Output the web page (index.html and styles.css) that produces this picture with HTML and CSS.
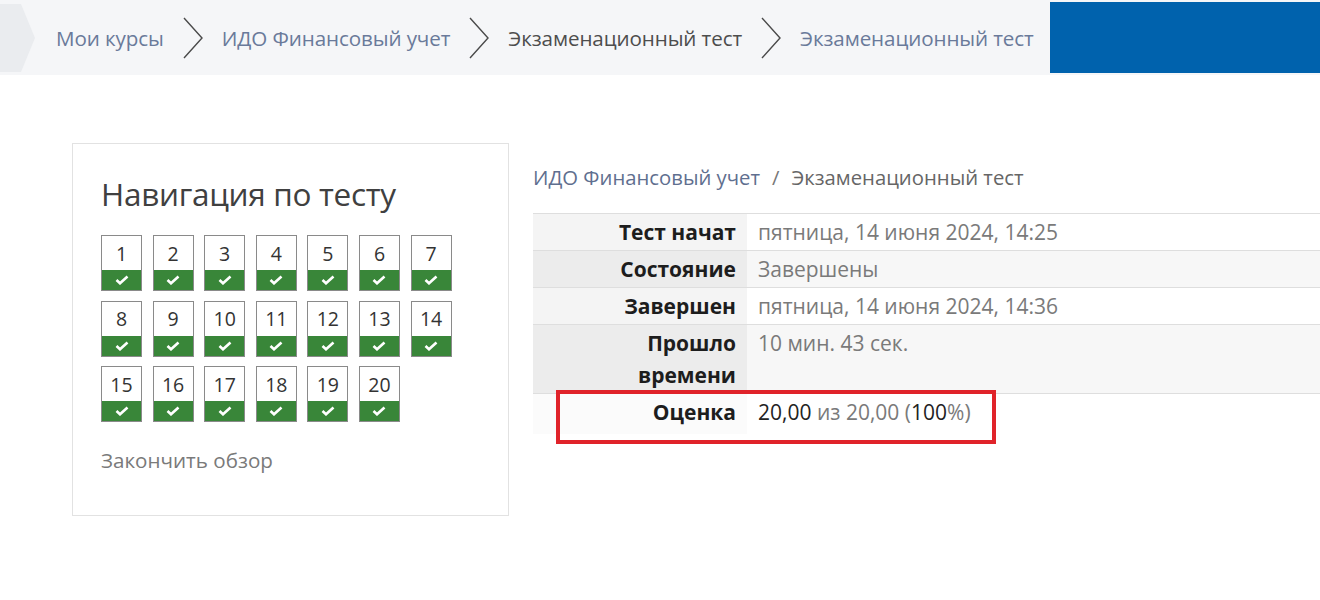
FILE: index.html
```html
<!DOCTYPE html>
<html lang="ru">
<head>
<meta charset="utf-8">
<title>Экзаменационный тест</title>
<link rel="stylesheet" href="styles.css">
</head>
<body>
<header class="crumbs">
  <svg class="crumbs-tip" width="36" height="75" viewBox="0 0 36 75"><polygon points="0,4 21,4 35,38 21,72 0,72" fill="#eaecef"/></svg>
  <nav class="crumbs-list">
    <a class="crumb link">Мои курсы</a>
    <svg class="sep" width="22" height="42" viewBox="0 0 22 42"><polyline points="2,1 20,21 2,41" fill="none" stroke="#4a4a4a" stroke-width="1.4"/></svg>
    <a class="crumb link">ИДО Финансовый учет</a>
    <svg class="sep" width="22" height="42" viewBox="0 0 22 42"><polyline points="2,1 20,21 2,41" fill="none" stroke="#4a4a4a" stroke-width="1.4"/></svg>
    <span class="crumb current">Экзаменационный тест</span>
    <svg class="sep" width="22" height="42" viewBox="0 0 22 42"><polyline points="2,1 20,21 2,41" fill="none" stroke="#4a4a4a" stroke-width="1.4"/></svg>
    <a class="crumb link">Экзаменационный тест</a>
  </nav>
  <div class="crumbs-block"></div>
</header>

<main class="page">
  <section class="navcard">
    <h2 class="navcard-title">Навигация по тесту</h2>
    <div class="qgrid">
      <div class="qbtn"><span class="qnum">1</span><span class="qstate"><svg width="14" height="10" viewBox="0 0 14 10"><polyline points="1.5,5 5,8.3 12.5,1.5" fill="none" stroke="#fff" stroke-width="2.6"/></svg></span></div>
      <div class="qbtn"><span class="qnum">2</span><span class="qstate"><svg width="14" height="10" viewBox="0 0 14 10"><polyline points="1.5,5 5,8.3 12.5,1.5" fill="none" stroke="#fff" stroke-width="2.6"/></svg></span></div>
      <div class="qbtn"><span class="qnum">3</span><span class="qstate"><svg width="14" height="10" viewBox="0 0 14 10"><polyline points="1.5,5 5,8.3 12.5,1.5" fill="none" stroke="#fff" stroke-width="2.6"/></svg></span></div>
      <div class="qbtn"><span class="qnum">4</span><span class="qstate"><svg width="14" height="10" viewBox="0 0 14 10"><polyline points="1.5,5 5,8.3 12.5,1.5" fill="none" stroke="#fff" stroke-width="2.6"/></svg></span></div>
      <div class="qbtn"><span class="qnum">5</span><span class="qstate"><svg width="14" height="10" viewBox="0 0 14 10"><polyline points="1.5,5 5,8.3 12.5,1.5" fill="none" stroke="#fff" stroke-width="2.6"/></svg></span></div>
      <div class="qbtn"><span class="qnum">6</span><span class="qstate"><svg width="14" height="10" viewBox="0 0 14 10"><polyline points="1.5,5 5,8.3 12.5,1.5" fill="none" stroke="#fff" stroke-width="2.6"/></svg></span></div>
      <div class="qbtn"><span class="qnum">7</span><span class="qstate"><svg width="14" height="10" viewBox="0 0 14 10"><polyline points="1.5,5 5,8.3 12.5,1.5" fill="none" stroke="#fff" stroke-width="2.6"/></svg></span></div>
      <div class="qbtn"><span class="qnum">8</span><span class="qstate"><svg width="14" height="10" viewBox="0 0 14 10"><polyline points="1.5,5 5,8.3 12.5,1.5" fill="none" stroke="#fff" stroke-width="2.6"/></svg></span></div>
      <div class="qbtn"><span class="qnum">9</span><span class="qstate"><svg width="14" height="10" viewBox="0 0 14 10"><polyline points="1.5,5 5,8.3 12.5,1.5" fill="none" stroke="#fff" stroke-width="2.6"/></svg></span></div>
      <div class="qbtn"><span class="qnum">10</span><span class="qstate"><svg width="14" height="10" viewBox="0 0 14 10"><polyline points="1.5,5 5,8.3 12.5,1.5" fill="none" stroke="#fff" stroke-width="2.6"/></svg></span></div>
      <div class="qbtn"><span class="qnum">11</span><span class="qstate"><svg width="14" height="10" viewBox="0 0 14 10"><polyline points="1.5,5 5,8.3 12.5,1.5" fill="none" stroke="#fff" stroke-width="2.6"/></svg></span></div>
      <div class="qbtn"><span class="qnum">12</span><span class="qstate"><svg width="14" height="10" viewBox="0 0 14 10"><polyline points="1.5,5 5,8.3 12.5,1.5" fill="none" stroke="#fff" stroke-width="2.6"/></svg></span></div>
      <div class="qbtn"><span class="qnum">13</span><span class="qstate"><svg width="14" height="10" viewBox="0 0 14 10"><polyline points="1.5,5 5,8.3 12.5,1.5" fill="none" stroke="#fff" stroke-width="2.6"/></svg></span></div>
      <div class="qbtn"><span class="qnum">14</span><span class="qstate"><svg width="14" height="10" viewBox="0 0 14 10"><polyline points="1.5,5 5,8.3 12.5,1.5" fill="none" stroke="#fff" stroke-width="2.6"/></svg></span></div>
      <div class="qbtn"><span class="qnum">15</span><span class="qstate"><svg width="14" height="10" viewBox="0 0 14 10"><polyline points="1.5,5 5,8.3 12.5,1.5" fill="none" stroke="#fff" stroke-width="2.6"/></svg></span></div>
      <div class="qbtn"><span class="qnum">16</span><span class="qstate"><svg width="14" height="10" viewBox="0 0 14 10"><polyline points="1.5,5 5,8.3 12.5,1.5" fill="none" stroke="#fff" stroke-width="2.6"/></svg></span></div>
      <div class="qbtn"><span class="qnum">17</span><span class="qstate"><svg width="14" height="10" viewBox="0 0 14 10"><polyline points="1.5,5 5,8.3 12.5,1.5" fill="none" stroke="#fff" stroke-width="2.6"/></svg></span></div>
      <div class="qbtn"><span class="qnum">18</span><span class="qstate"><svg width="14" height="10" viewBox="0 0 14 10"><polyline points="1.5,5 5,8.3 12.5,1.5" fill="none" stroke="#fff" stroke-width="2.6"/></svg></span></div>
      <div class="qbtn"><span class="qnum">19</span><span class="qstate"><svg width="14" height="10" viewBox="0 0 14 10"><polyline points="1.5,5 5,8.3 12.5,1.5" fill="none" stroke="#fff" stroke-width="2.6"/></svg></span></div>
      <div class="qbtn"><span class="qnum">20</span><span class="qstate"><svg width="14" height="10" viewBox="0 0 14 10"><polyline points="1.5,5 5,8.3 12.5,1.5" fill="none" stroke="#fff" stroke-width="2.6"/></svg></span></div>
    </div>
    <a class="finish">Закончить обзор</a>
  </section>

  <section class="review">
    <div class="path"><a class="path-link">ИДО Финансовый учет</a><span class="path-sep">/</span><span class="path-cur">Экзаменационный тест</span></div>
    <div class="summary-wrap">
      <table class="summary">
        <tr class="odd"><th>Тест начат</th><td>пятница, 14 июня 2024, 14:25</td></tr>
        <tr class="even"><th>Состояние</th><td>Завершены</td></tr>
        <tr class="odd"><th>Завершен</th><td>пятница, 14 июня 2024, 14:36</td></tr>
        <tr class="even"><th>Прошло времени</th><td>10 мин. 43 сек.</td></tr>
        <tr class="last"><th>Оценка</th><td><b class="strong">20,00</b> из 20,00 (<b class="strong">100</b>%)</td></tr>
      </table>
      <div class="highlight"></div>
    </div>
  </section>
</main>
</body>
</html>
```

FILE: styles.css
```css
html, body {
  margin: 0;
  padding: 0;
  background: #ffffff;
  font-family: "Open Sans", "Noto Sans", "DejaVu Sans", sans-serif;
  color: #333;
  overflow: hidden;
}

a { text-decoration: none; }

.crumbs {
  height: 75px;
  background: #f5f6f8;
  display: flex;
  align-items: center;
}

.crumbs-tip {
  flex: none;
  display: block;
  align-self: flex-start;
}

.crumbs-list {
  display: flex;
  align-items: center;
  margin-left: 20px;
  gap: 18px;
  flex: 1;
}

.crumb {
  font-size: 20.6px;
  white-space: nowrap;
  letter-spacing: -0.1px;
}
.crumb.link { color: #6a7a9a; }
.crumb.current { color: #4d4d4d; }

.sep {
  display: block;
  flex: none;
}

.crumbs-block {
  width: 270px;
  height: 71px;
  background: #0062ad;
  flex: none;
  align-self: flex-end;
  margin-bottom: 2px;
}

.page {
  display: flex;
  align-items: flex-start;
  padding-left: 72px;
  gap: 24px;
}

.navcard {
  margin-top: 68px;
  width: 437px;
  height: 373px;
  box-sizing: border-box;
  border: 1px solid #e2e2e2;
  padding: 28px 28px 0 28px;
  flex: none;
}

.navcard-title {
  margin: 0 0 19px 0;
  font-weight: 400;
  font-size: 31.5px;
  color: #404040;
  line-height: 44px;
  letter-spacing: -0.3px;
}

.qgrid {
  display: grid;
  grid-template-columns: repeat(7, 41px);
  column-gap: 10.6px;
  row-gap: 9.5px;
}

.qbtn {
  width: 41px;
  height: 56px;
  box-sizing: border-box;
  border: 1px solid #8a8a8a;
  display: flex;
  flex-direction: column;
  background: #fff;
}

.qnum {
  height: 34px;
  display: flex;
  align-items: center;
  justify-content: center;
  font-size: 19.5px;
  color: #333;
}

.qstate {
  flex: 1;
  background: #398639;
  display: flex;
  align-items: center;
  justify-content: center;
}

.finish {
  display: block;
  margin-top: 24px;
  font-size: 20.6px;
  color: #7a7a7a;
}

.review {
  flex: 1;
  padding-top: 88px;
  min-width: 0;
}

.path {
  font-size: 20.3px;
  line-height: 28px;
  white-space: nowrap;
}
.path-link { color: #5f6f8f; }
.path-sep { color: #777; margin: 0 12px; }
.path-cur { color: #666; }

.summary-wrap {
  position: relative;
  margin-top: 22px;
}

.summary {
  width: 100%;
  border-collapse: collapse;
  font-size: 21px;
}

.summary th, .summary td {
  border-top: 1px solid #dedede;
  line-height: 32px;
  padding: 2px 11px;
  vertical-align: top;
}

.summary th {
  width: 122px;
  padding-left: 81px;
  text-align: right;
  font-weight: 700;
  color: #1d1d1d;
}

.summary td {
  color: #7a7a7a;
  white-space: nowrap;
}

.odd th { background: #f4f4f4; }
.odd td { background: #ffffff; }
.even th { background: #ececec; }
.even td { background: #f7f7f7; }
.last th { background: #fbfbfb; }
.last td { background: #ffffff; }
.last th, .last td { padding-bottom: 6px; }

.strong {
  font-weight: 400;
  color: #222;
}

.highlight {
  position: absolute;
  left: 23px;
  top: 177px;
  width: 440px;
  height: 54px;
  box-sizing: border-box;
  border: 4px solid #e0232a;
}
```
